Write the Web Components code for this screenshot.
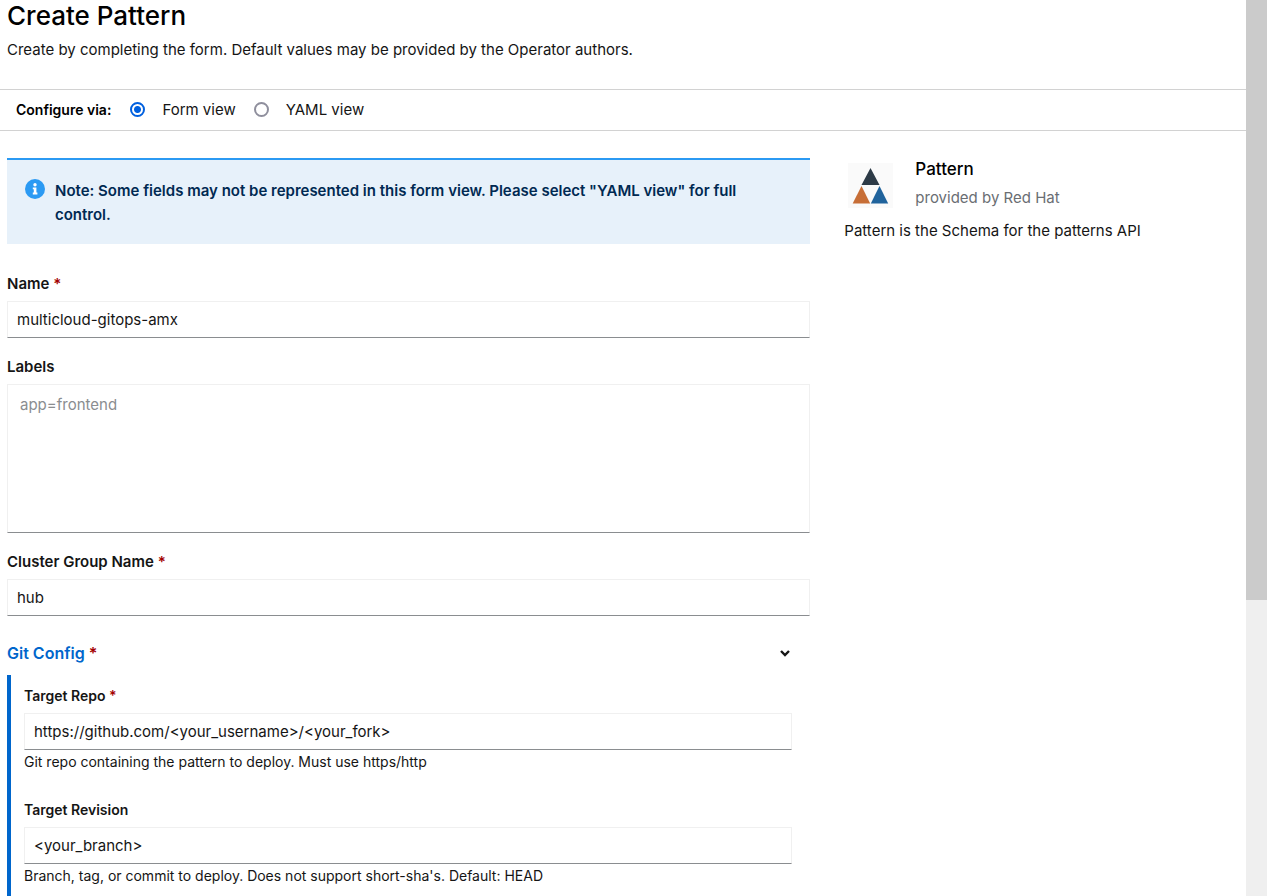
<!DOCTYPE html>
<html lang="en">
<head>
<meta charset="utf-8">
<meta name="viewport" content="width=device-width, initial-scale=1">
<title>Create Pattern</title>
<style>
  html, body { margin: 0; height: 100%; }
  body {
    overflow: hidden;
    background: #fff;
    color: #151515;
    font: 15px/24px Inter, "Liberation Sans", sans-serif;
    --blue: #06c;
    --rule: #d2d2d2;
  }
</style>
</head>
<body>
<app-shell>
  <page-header heading="Create Pattern">Create by completing the form. Default values may be provided by the Operator authors.</page-header>
  <view-switch></view-switch>
  <form-layout>
    <info-alert>Note: Some fields may not be represented in this form view. Please select "YAML view" for full control.</info-alert>
    <form-field label="Name" value="multicloud-gitops-amx" required></form-field>
    <form-field label="Labels" placeholder="app=frontend" multiline></form-field>
    <form-field label="Cluster Group Name" value="hub" required></form-field>
    <field-group label="Git Config">
      <form-field label="Target Repo" value="https://github.com/&lt;your_username&gt;/&lt;your_fork&gt;" help="Git repo containing the pattern to deploy. Must use https/http" required></form-field>
      <form-field label="Target Revision" value="&lt;your_branch&gt;" help="Branch, tag, or commit to deploy. Does not support short-sha's. Default: HEAD"></form-field>
    </field-group>
    <pattern-summary slot="aside" name="Pattern" provider="provided by Red Hat">Pattern is the Schema for the patterns API</pattern-summary>
  </form-layout>
</app-shell>

<script>
  class BaseElement extends HTMLElement {
    connectedCallback() {
      if (this.shadowRoot) return;
      const template = document.createElement('template');
      template.innerHTML = '<style>*{box-sizing:border-box}</style>' + this.render();
      this.attachShadow({ mode: 'open' }).append(template.content.cloneNode(true));
    }
    attr(name) {
      return (this.getAttribute(name) || '').replace(/&/g, '&amp;').replace(/</g, '&lt;').replace(/"/g, '&quot;');
    }
  }

  customElements.define('app-shell', class extends BaseElement {
    render() {
      return `<style>
        :host { display: grid; grid-template-columns: minmax(0, 1fr) 21px; height: 100vh; }
        main { overflow: hidden; }
        .track { background: #efefef; }
        .thumb { height: 67%; background: #cbcbcb; }
      </style>
      <main><slot></slot></main>
      <div class="track" aria-hidden="true"><div class="thumb"></div></div>`;
    }
  });

  customElements.define('page-header', class extends BaseElement {
    render() {
      return `<style>
        :host { display: block; padding: 0 7px 27px; border-bottom: 1px solid var(--rule); }
        h1 { margin: 0 0 6px; font-size: 26px; line-height: 32px; font-weight: 500; color: #000; }
        p { margin: 0; }
      </style>
      <h1>${this.attr('heading')}</h1>
      <p><slot></slot></p>`;
    }
  });

  customElements.define('view-switch', class extends BaseElement {
    render() {
      return `<style>
        :host { display: block; padding: 8px 16px; border-bottom: 1px solid var(--rule); }
        fieldset { display: flex; align-items: center; margin: 0; padding: 0; border: 0; }
        .title { margin-right: 19px; font-size: 14px; font-weight: 600; color: #000; }
        label { display: flex; align-items: center; gap: 17px; margin-right: 18px; }
        input {
          appearance: none; width: 15px; height: 15px; margin: 0 0 2px;
          border: 2px solid #8f8f9d; border-radius: 50%; background: #fff;
        }
        input:checked { border-color: #0060df; background: radial-gradient(circle, #0060df 3px, #fff 4px); }
      </style>
      <fieldset aria-labelledby="title">
        <span class="title" id="title">Configure via:</span>
        <label><input type="radio" name="view" checked>Form view</label>
        <label><input type="radio" name="view">YAML view</label>
      </fieldset>`;
    }
  });

  customElements.define('form-layout', class extends BaseElement {
    render() {
      return `<style>
        :host { display: grid; grid-template-columns: 2fr 1fr; gap: 34px; padding: 27px 0 0 7px; }
        form { display: flex; flex-direction: column; gap: 17px; min-width: 0; }
      </style>
      <form><slot></slot></form>
      <slot name="aside"></slot>`;
    }
  });

  customElements.define('info-alert', class extends BaseElement {
    render() {
      return `<style>
        :host {
          display: flex; gap: 10px; margin-bottom: 11px; padding: 19px 48px 17px 18px;
          border-top: 2px solid #2b9af3; background: #e7f1fa; color: #002952; font-weight: 600;
        }
        svg { flex: none; width: 20px; height: 20px; }
        p { margin: 0; }
      </style>
      <svg viewBox="0 0 20 20" aria-hidden="true">
        <circle cx="10" cy="10" r="10" fill="#2b9af3"/>
        <circle cx="10" cy="5.8" r="1.7" fill="#fff"/>
        <path d="M7.8 8.4h3.6v5.2h1v1.8H7.8v-1.8h1v-3.4h-1z" fill="#fff"/>
      </svg>
      <p><slot></slot></p>`;
    }
  });

  customElements.define('form-field', class extends BaseElement {
    render() {
      const star = this.hasAttribute('required') ? ' <span class="star">*</span>' : '';
      const help = this.hasAttribute('help') ? `<div class="help" id="help">${this.attr('help')}</div>` : '';
      const described = help ? ' aria-describedby="help"' : '';
      const control = this.hasAttribute('multiline')
        ? `<textarea id="control" placeholder="${this.attr('placeholder')}"></textarea>`
        : `<input id="control" type="text" value="${this.attr('value')}"${described}>`;
      return `<style>
        :host { display: block; }
        label { display: block; margin-bottom: 5px; font-size: var(--label-size, 15px); font-weight: 600; }
        .star { color: #a30000; }
        input, textarea {
          display: block; width: 100%; height: 37px; margin: 0; padding: 0 9px;
          border: 1px solid #f0f0f0; border-bottom-color: #8a8d90; border-radius: 0;
          background: #fff; color: inherit; font: inherit; outline: 0;
        }
        textarea { height: 149px; padding: 8px 12px; resize: none; }
        ::placeholder { color: #8a8d90; opacity: 1; }
        .help { font-size: 14px; }
      </style>
      <label for="control">${this.attr('label')}${star}</label>
      ${control}${help}`;
    }
  });

  customElements.define('field-group', class extends BaseElement {
    render() {
      return `<style>
        :host { display: block; margin-top: 8px; --label-size: 14px; }
        button {
          display: flex; align-items: center; justify-content: space-between;
          width: 100%; margin: 0 0 10px; padding: 0 19px 0 0; border: 0; background: none;
          color: var(--blue); font: inherit; font-size: 16px; font-weight: 600; text-align: left;
        }
        .star { color: #a30000; }
        svg { width: 12px; height: 8px; }
        .fields {
          display: flex; flex-direction: column; gap: 24px;
          padding: 9px 18px 32px 13px; border-left: 4px solid var(--blue);
        }
      </style>
      <button type="button" aria-expanded="true">
        <span>${this.attr('label')} <span class="star">*</span></span>
        <svg viewBox="0 0 12 8" aria-hidden="true"><path d="M2 2l4 4 4-4" fill="none" stroke="#151515" stroke-width="2.4"/></svg>
      </button>
      <div class="fields"><slot></slot></div>`;
    }
  });

  customElements.define('pattern-summary', class extends BaseElement {
    render() {
      return `<style>
        :host { display: block; min-width: 0; }
        header { display: flex; gap: 22px; margin: 0 0 9px 4px; }
        svg { flex: none; width: 45px; height: 45px; margin-top: 5px; }
        h2 { margin: 0 0 6px; font-size: 17px; line-height: 22px; font-weight: 500; color: #000; }
        .provider { color: #6a6e73; }
        p { margin: 0; }
      </style>
      <header>
        <svg viewBox="0 0 45 45" aria-hidden="true">
          <path d="M0 0h45v45H0z" fill="#fafafa"/>
          <path d="M22.5 5l9 17h-18z" fill="#2d3b47"/>
          <path d="M13.5 23l8.7 17.5H4.7z" fill="#c76e37"/>
          <path d="M31.5 23l8.7 17.5H22.8z" fill="#20639c"/>
        </svg>
        <div>
          <h2>${this.attr('name')}</h2>
          <div class="provider">${this.attr('provider')}</div>
        </div>
      </header>
      <p><slot></slot></p>`;
    }
  });
</script>
</body>
</html>
